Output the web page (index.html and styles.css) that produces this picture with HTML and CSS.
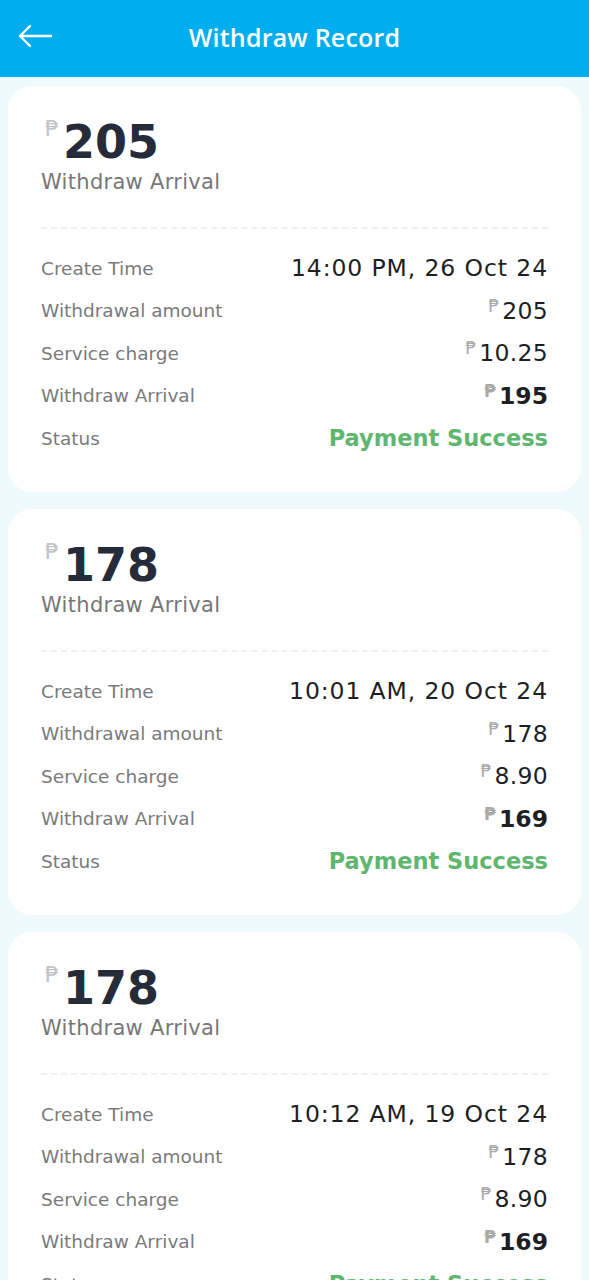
FILE: index.html
```html
<!DOCTYPE html>
<html>
<head>
<meta charset="utf-8">
<link rel="stylesheet" href="styles.css">
</head>
<body>
<header class="topbar">
  <svg class="back" width="36" height="24" viewBox="0 0 36 24"><path d="M34 12H3M13 2L3 12l10 10" fill="none" stroke="#fff" stroke-width="2.4" stroke-linecap="round" stroke-linejoin="round"/></svg>
  <h1 class="title">Withdraw Record</h1>
</header>
<main class="list">
  <section class="card">
    <div class="hero"><span class="peso big-peso">₱</span><span class="amount">205</span></div>
    <div class="sub">Withdraw Arrival</div>
    <div class="dash"></div>
    <div class="row"><span class="label">Create Time</span><span class="value date">14:00 PM, 26 Oct 24</span></div>
    <div class="row"><span class="label">Withdrawal amount</span><span class="value"><span class="peso">₱</span>205</span></div>
    <div class="row"><span class="label">Service charge</span><span class="value"><span class="peso">₱</span>10.25</span></div>
    <div class="row"><span class="label">Withdraw Arrival</span><span class="value strong"><span class="peso">₱</span>195</span></div>
    <div class="row"><span class="label">Status</span><span class="value ok">Payment Success</span></div>
  </section>
  <section class="card">
    <div class="hero"><span class="peso big-peso">₱</span><span class="amount">178</span></div>
    <div class="sub">Withdraw Arrival</div>
    <div class="dash"></div>
    <div class="row"><span class="label">Create Time</span><span class="value date">10:01 AM, 20 Oct 24</span></div>
    <div class="row"><span class="label">Withdrawal amount</span><span class="value"><span class="peso">₱</span>178</span></div>
    <div class="row"><span class="label">Service charge</span><span class="value"><span class="peso">₱</span>8.90</span></div>
    <div class="row"><span class="label">Withdraw Arrival</span><span class="value strong"><span class="peso">₱</span>169</span></div>
    <div class="row"><span class="label">Status</span><span class="value ok">Payment Success</span></div>
  </section>
  <section class="card">
    <div class="hero"><span class="peso big-peso">₱</span><span class="amount">178</span></div>
    <div class="sub">Withdraw Arrival</div>
    <div class="dash"></div>
    <div class="row"><span class="label">Create Time</span><span class="value date">10:12 AM, 19 Oct 24</span></div>
    <div class="row"><span class="label">Withdrawal amount</span><span class="value"><span class="peso">₱</span>178</span></div>
    <div class="row"><span class="label">Service charge</span><span class="value"><span class="peso">₱</span>8.90</span></div>
    <div class="row"><span class="label">Withdraw Arrival</span><span class="value strong"><span class="peso">₱</span>169</span></div>
    <div class="row"><span class="label">Status</span><span class="value ok">Payment Success</span></div>
  </section>
</main>
</body>
</html>
```
FILE: styles.css
```css
* { box-sizing: border-box; }
html, body { margin: 0; padding: 0; }
body {
  background: #eefafc;
  font-family: "DejaVu Sans", "Open Sans", sans-serif;
  width: 589px;
  height: 1280px;
  overflow: hidden;
}
.topbar {
  height: 77px;
  background: #00aeef;
  display: flex;
  align-items: center;
  justify-content: center;
  position: relative;
}
.back {
  position: absolute;
  left: 17px;
  top: 24px;
}
.title {
  margin: 0 0 4px 0;
  color: #fff;
  font-family: "Open Sans", sans-serif;
  font-size: 25px;
  font-weight: 600;
  letter-spacing: 0.2px;
}
.list {
  display: flex;
  flex-direction: column;
  gap: 17px;
  padding: 9px 8px;
}
.card {
  background: #fff;
  border-radius: 24px;
  padding: 30px 33px 0 33px;
  height: 406px;
  flex-shrink: 0;
}
.hero {
  display: flex;
  align-items: flex-start;
  height: 52px;
}
.amount {
  font-size: 46px;
  font-weight: 700;
  color: #262b3a;
  line-height: 52px;
  margin-left: 4px;
}
.peso {
  color: #a9a9a9;
  font-family: "DejaVu Sans", sans-serif;
  font-size: 17px;
  vertical-align: top;
  line-height: 1;
  margin-right: 3px;
  position: relative;
  top: 1px;
  letter-spacing: 0;
}
.big-peso {
  font-size: 22px;
  color: #c4c4c4;
  margin: 2px 0 0 4px;
  top: 0;
}
.sub {
  font-size: 21px;
  color: #777;
  line-height: 28px;
  letter-spacing: 0.3px;
}
.dash {
  margin-top: 31px;
  border-top: 2px dashed #f0f0f0;
  margin-bottom: 18px;
}
.row {
  display: flex;
  justify-content: space-between;
  align-items: center;
  height: 42.5px;
}
.label {
  font-size: 18.5px;
  color: #7a7a7a;
}
.value {
  font-size: 23.5px;
  color: #1d1f24;
  letter-spacing: 0.3px;
}
.date {
  letter-spacing: 0.9px;
}
.strong { font-weight: 700; letter-spacing: 0; }
.ok { color: #5fb66f; font-weight: 700; font-size: 22.5px; letter-spacing: 0; }
```
